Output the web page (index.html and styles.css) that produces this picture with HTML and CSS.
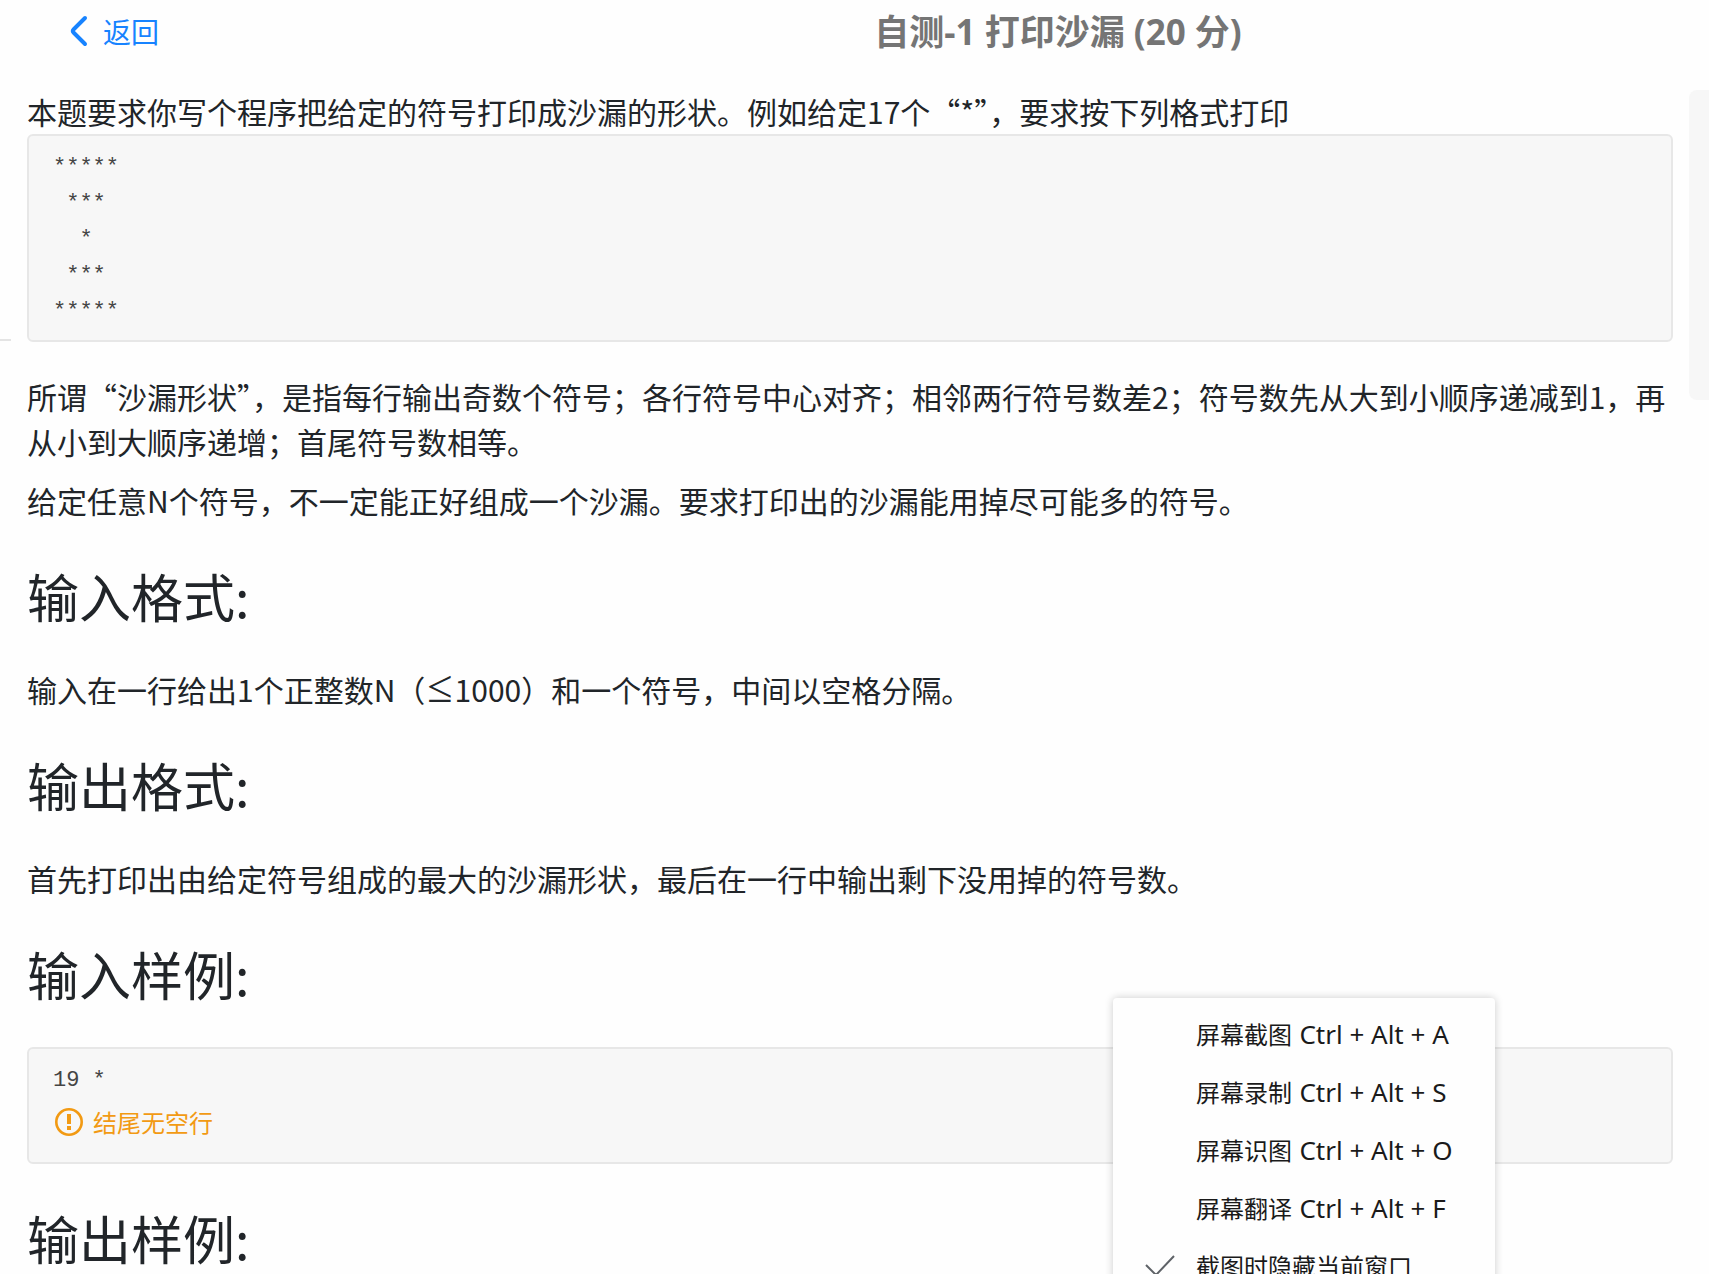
FILE: index.html
```
<!DOCTYPE html>
<html lang="zh-CN">
<head>
<meta charset="utf-8">
<meta name="viewport" content="width=device-width, initial-scale=1">
<title>自测-1 打印沙漏</title>
<link rel="stylesheet" href="styles.css">
</head>
<body>
<div class="page">
  <header class="header">
    <a class="back" href="#">
      <svg class="back-icon" viewBox="0 0 18 32" aria-hidden="true"><path d="M15 3 3.500 14.500q-1.500 1.500 0 3L15 29" fill="none" stroke="currentColor" stroke-width="4" stroke-linecap="round"/></svg>
      <span>返回</span>
    </a>
    <h1 class="title">自测-1 打印沙漏 (20 分)</h1>
  </header>
  <div class="layout">
    <div class="rail"></div>
    <main class="problem">
      <p class="lead">本题要求你写个程序把给定的符号打印成沙漏的形状。例如给定17个“*”，要求按下列格式打印</p>
      <pre class="code shape"><code>*****
 ***
  *
 ***
*****</code></pre>
      <p>所谓“沙漏形状”，是指每行输出奇数个符号；各行符号中心对齐；相邻两行符号数差2；符号数先从大到小顺序递减到1，再从小到大顺序递增；首尾符号数相等。</p>
      <p>给定任意N个符号，不一定能正好组成一个沙漏。要求打印出的沙漏能用掉尽可能多的符号。</p>
      <h2>输入格式:</h2>
      <p>输入在一行给出1个正整数N（<span class="math">≤</span>1000）和一个符号，中间以空格分隔。</p>
      <h2>输出格式:</h2>
      <p>首先打印出由给定符号组成的最大的沙漏形状，最后在一行中输出剩下没用掉的符号数。</p>
      <h2>输入样例:</h2>
      <div class="code sample">
        <pre><code>19 *</code></pre>
        <div class="notice">
          <svg class="notice-icon" viewBox="0 0 28 28" aria-hidden="true"><circle cx="14" cy="14" r="12.700" fill="none" stroke="currentColor" stroke-width="2.600"/><path d="M12 6h4v10h-4zM12 18h4v4h-4z" fill="currentColor"/></svg>
          <span>结尾无空行</span>
        </div>
      </div>
      <h2>输出样例:</h2>
    </main>
    <aside class="side"></aside>
  </div>
  <div class="menu" role="menu">
    <button class="item" role="menuitem"><span>屏幕截图 <kbd>Ctrl + Alt + A</kbd></span></button>
    <button class="item" role="menuitem"><span>屏幕录制 <kbd>Ctrl + Alt + S</kbd></span></button>
    <button class="item" role="menuitem"><span>屏幕识图 <kbd>Ctrl + Alt + O</kbd></span></button>
    <button class="item" role="menuitem"><span>屏幕翻译 <kbd>Ctrl + Alt + F</kbd></span></button>
    <button class="item" role="menuitemcheckbox" aria-checked="true"><svg class="check" viewBox="0 0 30 22" aria-hidden="true"><path d="M1 10 11 20 29 1" fill="none" stroke="currentColor" stroke-width="2"/></svg><span>截图时隐藏当前窗口</span></button>
  </div>
</div>
</body>
</html>
```

FILE: styles.css
```
* {
  box-sizing: border-box;
}

body {
  margin: 0;
  background: #fefefe;
  color: #212529;
  font: 30px/45px "Noto Sans CJK SC", sans-serif;
}

.page {
  position: relative;
  height: 100vh;
  overflow: hidden;
}

.header {
  display: grid;
  grid-template-columns: 407px 1fr;
  align-items: center;
  height: 62px;
}

.back {
  display: flex;
  align-items: center;
  gap: 15px;
  padding-left: 70px;
  color: #1783ff;
  font-size: 28px;
  text-decoration: none;
}

.back-icon {
  width: 18px;
  height: 32px;
}

.title {
  margin: 0;
  color: #757575;
  font-family: "Noto Sans", "Noto Sans CJK SC", sans-serif;
  font-size: 35px;
  font-weight: 700;
  text-align: center;
}

.layout {
  display: grid;
  grid-template-columns: 11px minmax(0, 1fr) 20px;
  gap: 16px;
  padding-top: 28px;
}

.rail {
  height: 251px;
  border-bottom: 2px solid #e4e4e4;
}

.side {
  height: 310px;
  border-radius: 8px 0 0 8px;
  background: #f7f7f7;
}

.problem p {
  margin: 0 0 14px;
}

.problem .lead {
  margin: 0;
  padding-bottom: 2px;
  line-height: 42px;
}

.problem h2 {
  margin: 42px 0 40px;
  font-size: 52px;
  font-weight: 400;
  line-height: 62px;
}

.math {
  margin: 0 2px;
  font-family: "Liberation Serif", serif;
  font-size: 46px;
  line-height: 30px;
}

.code {
  margin: 0;
  padding: 14px 24px 10px;
  border: 2px solid #e7e7e7;
  border-radius: 6px;
  background: #f7f7f7;
  color: #444;
  font-size: 22px;
  line-height: 36px;
}

.code pre {
  margin: 0;
}

.code code {
  display: block;
  font-family: "Liberation Mono", monospace;
}

.problem .shape {
  margin-bottom: 32px;
}

.problem .sample {
  margin: 42px 0 43px;
  padding-bottom: 18px;
}

.notice {
  display: flex;
  align-items: center;
  gap: 10px;
  height: 45px;
  padding-left: 2px;
  color: #f29a13;
  font-size: 24px;
}

.notice-icon {
  width: 28px;
  height: 28px;
}

.menu {
  position: absolute;
  top: 998px;
  right: 214px;
  width: 382px;
  padding: 7px 0;
  border-radius: 4px;
  background: #fefefe;
  box-shadow: 0 0 8px rgba(0, 0, 0, 0.2);
}

.item {
  display: grid;
  grid-template-columns: 30px 1fr;
  gap: 21px;
  align-items: center;
  width: 100%;
  height: 58px;
  padding: 0 0 0 32px;
  border: 0;
  background: none;
  color: #1a1a1a;
  font: 24px/36px "Noto Sans CJK SC", sans-serif;
  text-align: left;
}

.item span {
  grid-column: 2;
}

.item kbd {
  margin-left: 2px;
  font-family: "Noto Sans", sans-serif;
  font-size: 26px;
}

.check {
  width: 30px;
  height: 22px;
  color: #5f6368;
}
```
